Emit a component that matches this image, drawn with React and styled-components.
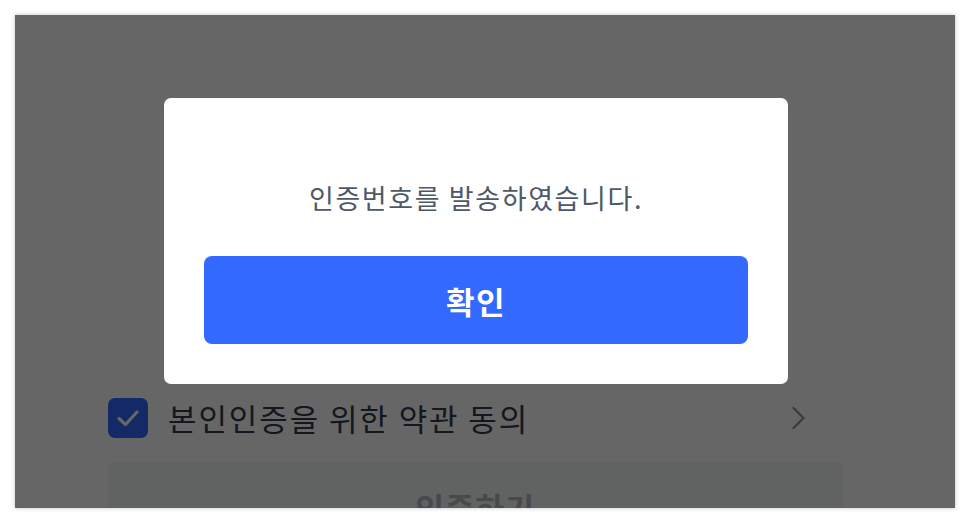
import React from 'react'
import styled, { createGlobalStyle } from 'styled-components'

const GlobalStyle = createGlobalStyle`
  html, body {
    margin: 0;
    padding: 0;
    background: #ffffff;
  }
  body {
    font-family: "Noto Sans CJK KR", "Noto Sans", sans-serif;
  }
`

const Frame = styled.div`
  position: relative;
  margin: 15px;
  width: 940px;
  height: 493px;
  overflow: hidden;
  background: #ffffff;
  box-shadow: 0 0 4px rgba(0, 0, 0, 0.25);
`

const Page = styled.div`
  box-sizing: border-box;
  padding: 383px 19px 0 0;
  display: flex;
  flex-direction: column;
  align-items: center;
`

const Content = styled.div`
  width: 735px;
  display: flex;
  flex-direction: column;
  gap: 24px;
`

const AgreeRow = styled.div`
  display: flex;
  align-items: center;
  height: 40px;
  gap: 20px;
`

const CheckBox = styled.div`
  width: 40px;
  height: 40px;
  flex: none;
  border-radius: 7px;
  background: #3369ff;
  display: flex;
  align-items: center;
  justify-content: center;
`

const AgreeLabel = styled.span`
  flex: 1;
  font-size: 31px;
  line-height: 40px;
  color: #333d4b;
  letter-spacing: 1.9px;
`

const Chevron = styled.svg`
  margin-right: 38px;
  flex: none;
`

const SubmitButton = styled.button`
  height: 88px;
  border: none;
  border-radius: 8px;
  background: ${props => (props.primary ? '#3369ff' : '#f2f4f6')};
  color: ${props => (props.primary ? '#ffffff' : '#b0b8c1')};
  font-family: inherit;
  font-size: 31px;
  font-weight: 700;
  letter-spacing: 1.5px;
  cursor: pointer;
  padding: 0;
`

const Overlay = styled.div`
  position: absolute;
  inset: 0;
  background: rgba(0, 0, 0, 0.6);
  display: flex;
  justify-content: center;
  align-items: flex-start;
  padding: 83px 18px 0 0;
`

const Modal = styled.div`
  width: 624px;
  box-sizing: border-box;
  padding: 80px 40px 40px;
  background: #ffffff;
  border-radius: 7px;
  display: flex;
  flex-direction: column;
`

const Message = styled.p`
  margin: 0 0 38px;
  text-align: center;
  font-size: 27px;
  line-height: 40px;
  letter-spacing: 1.6px;
  color: #4e5968;
`

export default function App() {
  return (
    <>
      <GlobalStyle />
      <Frame>
        <Page>
          <Content>
            <AgreeRow>
              <CheckBox>
                <svg width="24" height="18" viewBox="0 0 24 18" fill="none">
                  <path d="M3 9.5 L9.5 15.5 L21 3" stroke="#ffffff" strokeWidth="3.2" strokeLinecap="round" strokeLinejoin="round" />
                </svg>
              </CheckBox>
              <AgreeLabel>본인인증을 위한 약관 동의</AgreeLabel>
              <Chevron width="13" height="24" viewBox="0 0 13 24" fill="none">
                <path d="M1.5 2 L11.5 12 L1.5 22" stroke="#8b95a1" strokeWidth="2.2" strokeLinecap="round" strokeLinejoin="round" />
              </Chevron>
            </AgreeRow>
            <SubmitButton>인증하기</SubmitButton>
          </Content>
        </Page>
        <Overlay>
          <Modal>
            <Message>인증번호를 발송하였습니다.</Message>
            <SubmitButton primary>확인</SubmitButton>
          </Modal>
        </Overlay>
      </Frame>
    </>
  )
}
